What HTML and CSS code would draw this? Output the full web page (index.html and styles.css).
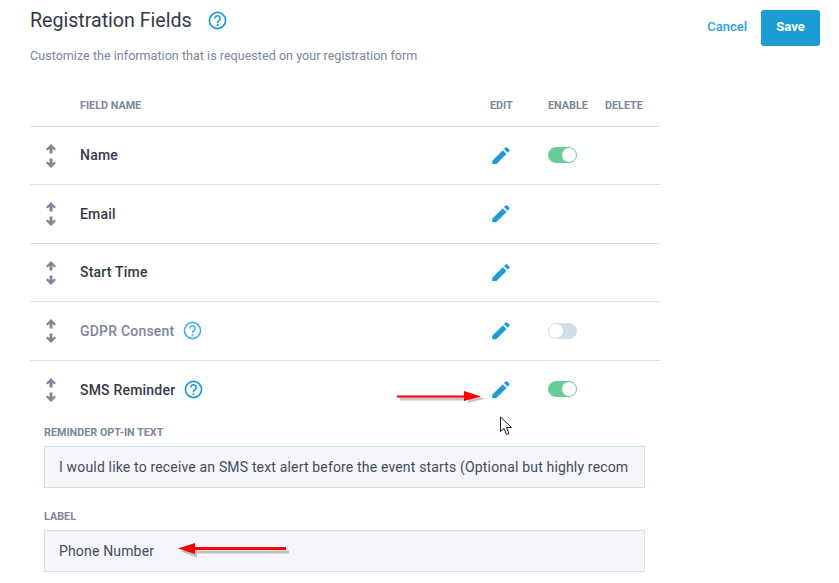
FILE: index.html
```html
<!DOCTYPE html>
<html lang="en">
<head>
    <meta charset="UTF-8">
    <meta name="viewport" content="width=device-width, initial-scale=1.0">
    <title>Registration Fields</title>
    <link rel="stylesheet" href="styles.css">
</head>
<body>
    <svg class="icon-defs" width="0" height="0">
        <defs>
            <symbol id="help" viewBox="0 0 20 20">
                <circle cx="10" cy="10" r="8.500" fill="none" stroke="currentColor" stroke-width="1.800"/>
                <path d="M7.200 7.900a2.800 2.800 0 1 1 4.600 2.100c-1 .8-1.800 1.200-1.800 2.500" fill="none" stroke="currentColor" stroke-width="1.700"/>
                <rect x="9.100" y="13.700" width="1.800" height="1.800" fill="currentColor"/>
            </symbol>
            <symbol id="pencil" viewBox="0 0 18 18">
                <path d="M0 18v-3.800L10.900 3.300l3.800 3.800L3.800 18zM12.100 2.100l1.500-1.500a1.300 1.300 0 0 1 1.800 0l2 2a1.300 1.300 0 0 1 0 1.800l-1.500 1.500z" fill="currentColor"/>
            </symbol>
            <symbol id="sort" viewBox="0 0 10 24">
                <path d="M5 0 10 5 8.500 6.500 6.500 4.800V9.500H3.500V4.800L1.500 6.500 0 5zM5 24 0 19 1.500 17.500 3.500 19.200V14.500H6.500V19.200L8.500 17.500 10 19z" fill="currentColor"/>
            </symbol>
        </defs>
    </svg>

    <div class="page">
        <div class="page-header">
            <div>
                <div class="title-row">
                    <h2>Registration Fields</h2>
                    <svg class="help help-title"><use href="#help"/></svg>
                </div>
                <p class="subtitle">Customize the information that is requested on your registration form</p>
            </div>
            <div class="header-actions">
                <a class="cancel-link">Cancel</a>
                <button class="save-btn">Save</button>
            </div>
        </div>

        <div class="fields">
            <div class="field-row head-row">
                <span></span>
                <span>FIELD NAME</span>
                <span>EDIT</span>
                <span>ENABLE</span>
                <span>DELETE</span>
            </div>
            <div class="field-row">
                <svg class="sort"><use href="#sort"/></svg>
                <span class="field-name">Name</span>
                <svg class="edit"><use href="#pencil"/></svg>
                <span class="toggle on"></span>
            </div>
            <div class="field-row">
                <svg class="sort"><use href="#sort"/></svg>
                <span class="field-name">Email</span>
                <svg class="edit"><use href="#pencil"/></svg>
            </div>
            <div class="field-row">
                <svg class="sort"><use href="#sort"/></svg>
                <span class="field-name">Start Time</span>
                <svg class="edit"><use href="#pencil"/></svg>
            </div>
            <div class="field-row">
                <svg class="sort"><use href="#sort"/></svg>
                <span class="field-name muted">GDPR Consent <svg class="help help-light"><use href="#help"/></svg></span>
                <svg class="edit"><use href="#pencil"/></svg>
                <span class="toggle"></span>
            </div>
            <div class="field-row open-row">
                <svg class="sort"><use href="#sort"/></svg>
                <span class="field-name">SMS Reminder <svg class="help"><use href="#help"/></svg></span>
                <svg class="edit"><use href="#pencil"/></svg>
                <span class="toggle on"></span>
            </div>
            <div class="field-form">
                <label>REMINDER OPT-IN TEXT</label>
                <input class="text-box" type="text" readonly value="I would like to receive an SMS text alert before the event starts (Optional but highly recommended)">
                <label>LABEL</label>
                <input class="text-box" type="text" readonly value="Phone Number">
            </div>
        </div>
    </div>

    <!-- annotations drawn over the screenshot -->
    <svg class="arrow arrow-edit" width="96" height="20" viewBox="0 0 96 20">
        <path d="M2 10H70V12.500L88 8 70 4V6H2z" transform="translate(2 2.500)" fill="#000" opacity=".22"/>
        <path d="M1 7.500H68V3L85 8.500 68 13V9.500H1z" fill="#f00"/>
    </svg>
    <svg class="arrow arrow-label" width="116" height="20" viewBox="0 0 116 20">
        <path d="M18 4 2 9 18 15V11H110V8H18z" transform="translate(2 2.500)" fill="#000" opacity=".22"/>
        <path d="M18 3 1 8.500 18 14V10H109V7H18z" fill="#f00"/>
    </svg>
    <svg class="pointer" width="14" height="20" viewBox="0 0 14 20">
        <path d="M1.500 1V15.500L5 12.500 7.500 18.500 10 17.500 7.500 11.500H12.500z" fill="#fff" stroke="#1d2530" stroke-width="1"/>
    </svg>
</body>
</html>
```

FILE: styles.css
```css
* {
    box-sizing: border-box;
}

body {
    font-family: Roboto, sans-serif;
    margin: 0;
    padding: 0;
    background-color: #fff;
    color: #333a47;
    position: relative;
    height: 583px;
    overflow: hidden;
}

.icon-defs {
    position: absolute;
}

.page {
    padding: 9px 19px 0 30px;
}

.page-header {
    display: flex;
    justify-content: space-between;
    align-items: flex-start;
    height: 89px;
}

.title-row {
    display: flex;
    align-items: center;
    gap: 16.4px;
    height: 23px;
}

.title-row h2 {
    font-size: 19.6px;
    font-weight: 400;
    margin: 0;
}

.subtitle {
    margin: 15px 0 0;
    font-size: 12.6px;
    line-height: 17px;
    color: #7d8797;
}

.header-actions {
    display: flex;
    align-items: center;
    gap: 14px;
    padding-top: 1px;
}

.cancel-link {
    font-size: 13px;
    font-weight: 500;
    color: #29a3d9;
    margin-top: -3px;
}

.save-btn {
    width: 59px;
    height: 36px;
    padding: 0 0 3px;
    border: none;
    border-radius: 3px;
    background-color: #1b9dd4;
    color: #fff;
    font-family: inherit;
    font-size: 13px;
    font-weight: 700;
}

.fields {
    width: 630px;
}

.field-row {
    display: grid;
    grid-template-columns: 50px 410px 58px 57px 55px;
    align-items: center;
    height: 58.5px;
    border-bottom: 1px solid #dcdfe3;
}

.head-row {
    height: 28.9px;
    padding-top: 1px;
    align-items: start;
    font-size: 10.8px;
    font-weight: 700;
    line-height: 14px;
    color: #7d8797;
}

.open-row {
    height: 58px;
    border-bottom: none;
}

.field-name {
    display: flex;
    align-items: center;
    gap: 9px;
    margin-bottom: .6px;
    font-size: 14px;
    font-weight: 500;
    letter-spacing: .2px;
}

.muted {
    color: #7d8797;
}

.help {
    width: 19px;
    height: 19px;
    color: #1b9dd4;
}

.help-light {
    color: #46b5e3;
}

.sort {
    width: 10px;
    height: 24px;
    margin-left: 16px;
    color: #7d8797;
}

.edit {
    width: 18px;
    height: 17.5px;
    margin-left: 2px;
    color: #1b9dd4;
}

.toggle {
    display: block;
    position: relative;
    width: 29px;
    height: 16px;
    margin-bottom: 1px;
    border-radius: 8px;
    border: 1px solid #d0dfe9;
    background-color: #d0dfe9;
}

.toggle::after {
    content: "";
    position: absolute;
    top: 0;
    left: 0;
    width: 14px;
    height: 14px;
    border-radius: 50%;
    background-color: #fff;
}

.toggle.on {
    background-color: #68cd9b;
    border-color: #68cd9b;
}

.toggle.on::after {
    left: 13px;
}

.field-form {
    padding: 7px 0 0 14px;
    width: 615px;
}

.field-form label {
    display: block;
    font-size: 10.8px;
    font-weight: 700;
    line-height: 14px;
    color: #7d8797;
    margin-bottom: 6px;
}

.text-box {
    display: block;
    width: 100%;
    height: 42px;
    margin: 0 0 22px;
    padding: 0 15px 0 14px;
    border: 1px solid #d0dfe9;
    border-radius: 0;
    outline: none;
    background-color: #f4f6fa;
    font-family: inherit;
    font-size: 14px;
    letter-spacing: .165px;
    color: #444c5a;
}

.arrow,
.pointer {
    position: absolute;
}

.arrow-edit {
    left: 396px;
    top: 388px;
}

.arrow-label {
    left: 177px;
    top: 540px;
}

.pointer {
    left: 499px;
    top: 416px;
}
```
